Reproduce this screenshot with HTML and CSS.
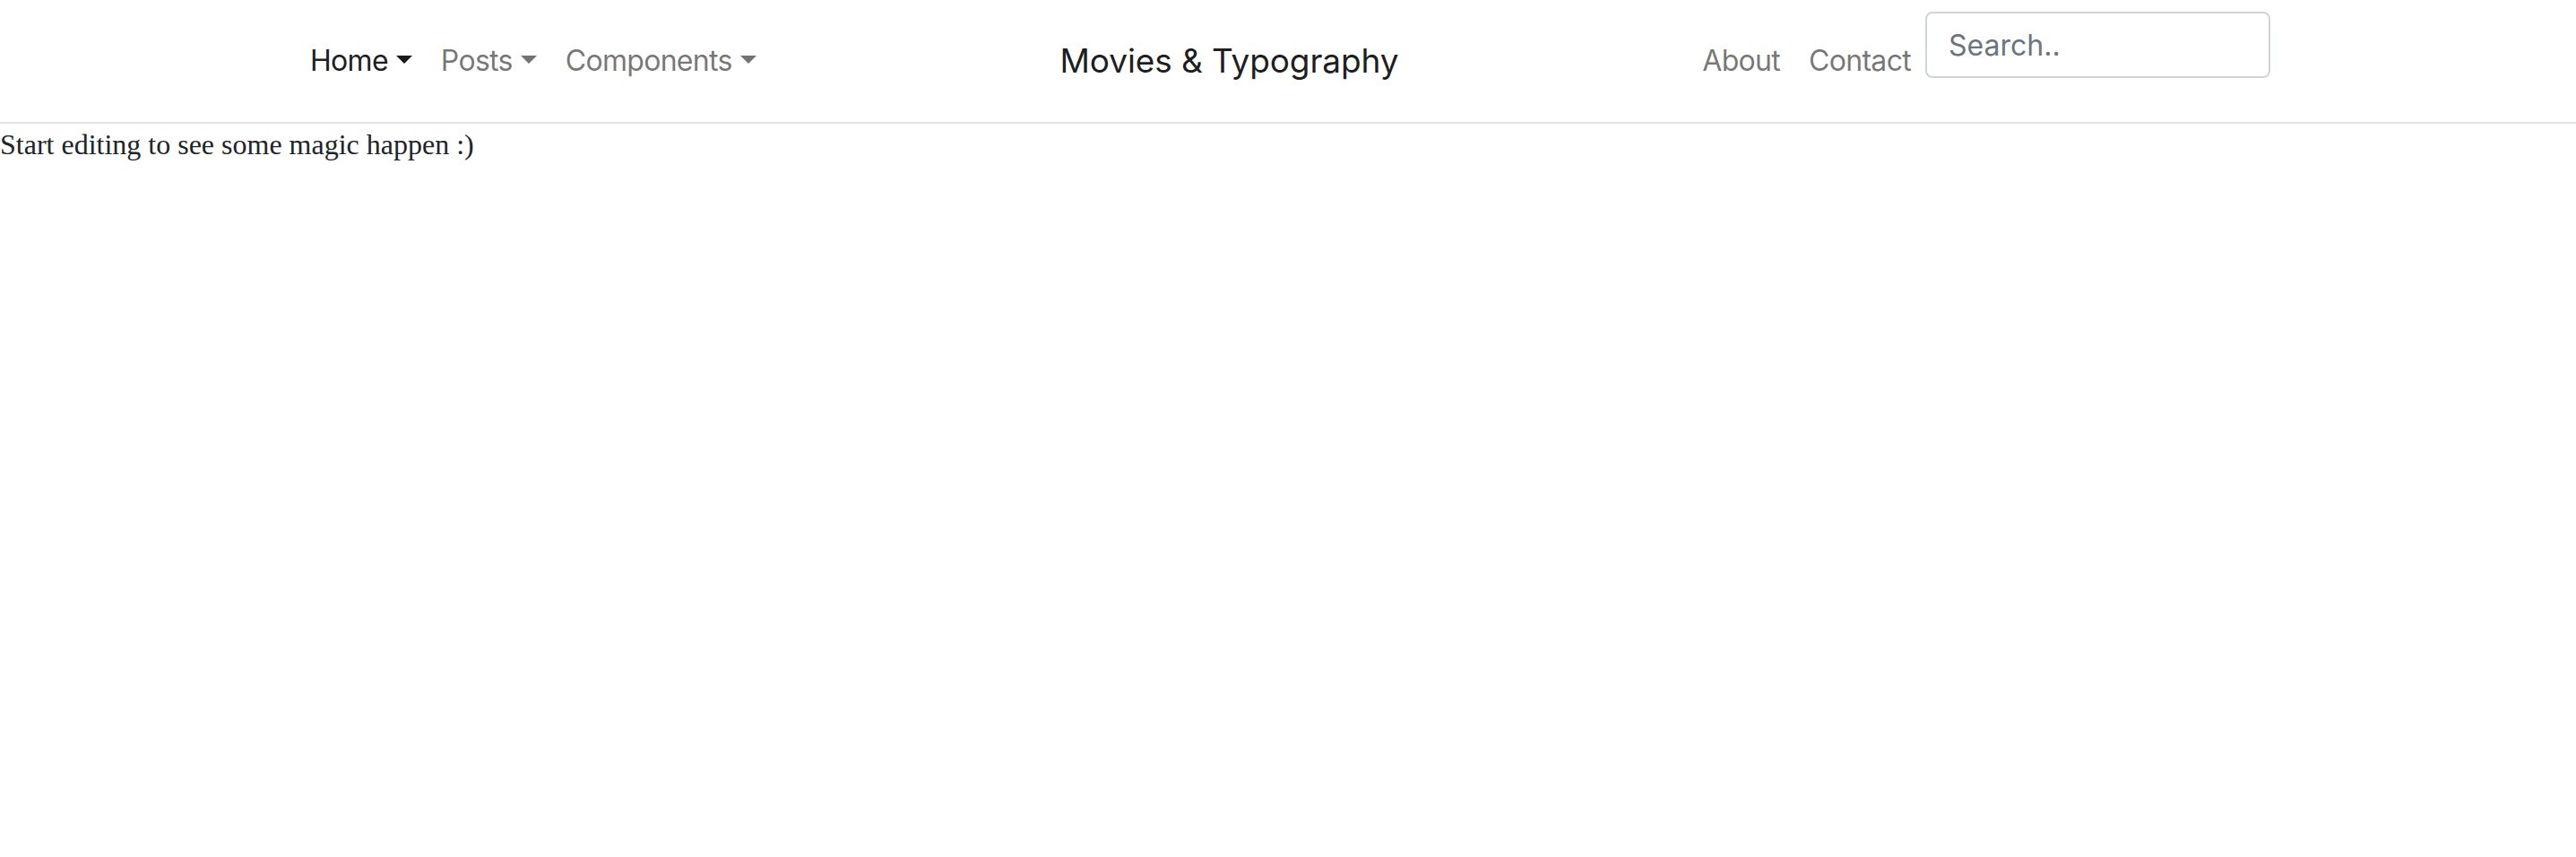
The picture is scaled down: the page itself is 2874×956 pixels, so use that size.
FILE: index.html
```html
<!DOCTYPE html>
<html>
<head>
<meta charset="utf-8">
<link rel="stylesheet" href="styles.css">
</head>
<body>
<header class="navbar">
  <ul class="nav nav-left">
    <li><a class="nav-link active" href="#">Home<span class="caret"></span></a></li>
    <li><a class="nav-link" href="#">Posts<span class="caret"></span></a></li>
    <li><a class="nav-link" href="#">Components<span class="caret"></span></a></li>
  </ul>
  <a class="brand" href="#">Movies &amp; Typography</a>
  <div class="nav-right">
    <ul class="nav">
      <li><a class="nav-link" href="#">About</a></li>
      <li><a class="nav-link" href="#">Contact</a></li>
    </ul>
    <input class="search" type="text" placeholder="Search..">
  </div>
</header>
<div class="content">Start editing to see some magic happen :)</div>
</body>
</html>
```

FILE: styles.css
```css
html, body {
  margin: 0;
  padding: 0;
  background: #fff;
}
body {
  font-family: "Liberation Serif", "Times New Roman", serif;
  font-size: 32px;
  color: #212529;
}
.navbar {
  display: flex;
  align-items: center;
  justify-content: space-between;
  height: 136px;
  padding: 0 341px 0 330px;
  border-bottom: 2px solid #dee2e6;
  box-sizing: content-box;
  font-family: Inter, "Noto Sans", sans-serif;
}
.nav {
  display: flex;
  list-style: none;
  margin: 0;
  padding: 0;
}
.nav-link {
  display: flex;
  align-items: center;
  padding: 16px 16px;
  font-size: 32px;
  line-height: 48px;
  letter-spacing: -0.7px;
  color: rgba(0, 0, 0, 0.55);
  text-decoration: none;
}
.nav-link.active {
  color: rgba(0, 0, 0, 0.9);
}
.caret {
  display: inline-block;
  margin-left: 9px;
  width: 0;
  height: 0;
  border-top: 9.6px solid currentColor;
  border-left: 9.6px solid transparent;
  border-right: 9.6px solid transparent;
  margin-top: -4px;
}
.brand {
  font-size: 37px;
  line-height: 60px;
  padding: 10px 0;
  letter-spacing: -0.1px;
  color: rgba(0, 0, 0, 0.9);
  text-decoration: none;
}
.nav-right {
  display: flex;
  align-items: center;
}
.search {
  box-sizing: border-box;
  width: 385px;
  height: 74px;
  margin-bottom: 36px;
  padding: 12px 24px;
  font-family: Inter, "Noto Sans", sans-serif;
  font-size: 32px;
  color: #495057;
  border: 2px solid #ced4da;
  border-radius: 8px;
  outline: none;
}
.search::placeholder {
  color: #6c757d;
}
.content {
  line-height: 36px;
  padding-top: 5px;
}
```
